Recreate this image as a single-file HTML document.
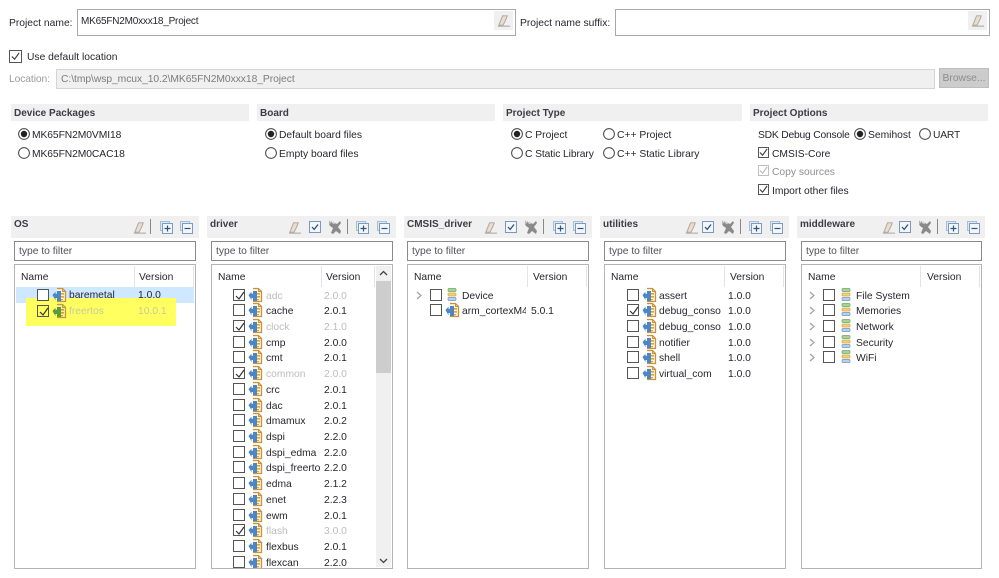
<!DOCTYPE html>
<html><head><meta charset="utf-8"><style>
html,body{margin:0;padding:0;background:#fff}
#a{position:relative;width:999px;height:578px;overflow:hidden;background:#fff;font:10.3px/16px "Liberation Sans",sans-serif;color:#26262e;filter:blur(.35px)}
#a div,#a span,#a svg{position:absolute;white-space:nowrap}
.b{border:1px solid #a8a8a8;background:#fff;box-sizing:border-box}
.h{background:#f0f0f0;height:17px;top:104px;width:238px}
.h b,.ph b{position:absolute;left:3px;top:2px;font-weight:bold;font-size:10px;color:#3c3c44}
.ph{background:#f0f0f0;height:22px;top:216px;left:0}
.ph b{top:1px}
.p{top:0;height:578px}
.f{top:241px;height:20px;border:1px solid #8a8a8a;background:#fff;box-sizing:border-box;color:#50505a;padding-left:4px;line-height:20px}
.tr{top:264px;height:305px;border:1px solid #b4b4b4;background:#fff;box-sizing:border-box}
.hd{top:270px}
.sep{top:266px;width:1px;height:21px;background:#e4e4e4}
.r{left:0;top:0;width:1px;height:16px}
.k{left:var(--c);top:2px;width:12px;height:12px;border:1px solid #555;background:#fff;box-sizing:border-box}
.kk{width:10px;height:10px;left:1px;top:1px}
.i{left:var(--i);top:0;width:15px;height:16px}
.t{left:var(--t);top:2px}
.v{left:var(--v);top:2px}
.g{color:#bdbdbd}
.ar{left:var(--a);top:4px;width:6px;height:9px}
.rb{width:12px;height:12px}
</style></head><body><div id="a">
<svg width="0" height="0" style="left:0;top:0"><defs>
<symbol id="p" viewBox="0 0 15 16"><path d="M5 1.5h5.5l3 3v10H5" fill="#fff4dc" stroke="#c8923e" stroke-width="1.3"/><path d="M10.5 1.5v3h3" fill="none" stroke="#c8923e"/><path d="M0.5 8l3-3.2v2h1.500V4h4v10H5v-3H3.500v2.200z" fill="#4c86c6"/><path d="M9 6h3v1.600H9zM9 9h3v1.600H9zM9 12h2v1.200H9z" fill="#e0a62e"/></symbol>
<symbol id="pg" viewBox="0 0 15 16"><path d="M5 1.5h5.500l3 3v10H5" fill="#f6f2a0" stroke="#c09c38" stroke-width="1.300"/><path d="M10.500 1.500v3h3" fill="none" stroke="#c09c38"/><path d="M0.500 8l3-3.200v2h1.500V4h4v10H5v-3H3.500v2.200z" fill="#5e9a3c"/><path d="M9 6h3v1.600H9zM9 9h3v1.600H9zM9 12h2v1.200H9z" fill="#d0a028"/></symbol>
<symbol id="st" viewBox="0 0 10 16"><rect x="1" y="1.500" width="8" height="3" rx="1" fill="#a8d0a0" stroke="#6aa860" stroke-width=".7"/><rect x="1" y="6" width="8" height="3" rx="1" fill="#f0d080" stroke="#d8a838" stroke-width=".7"/><rect x="1" y="10.500" width="8" height="3" rx="1" fill="#b8d0ec" stroke="#6c94c4" stroke-width=".7"/></symbol>
<symbol id="ck" viewBox="0 0 10 10"><path d="M1 5l3 3 5-7" fill="none" stroke="#333" stroke-width="1.200"/></symbol>
<symbol id="er" viewBox="0 0 16 16"><path d="M3 13L7 3h5l-1.500 4-3 6z" fill="#e8ddd0" stroke="#b0a494"/><path d="M2 14h13" stroke="#a0a0a0"/></symbol>
<symbol id="sa" viewBox="0 0 14 14"><rect x="1.500" y="1.500" width="11" height="11" fill="#f2f6fb" stroke="#7a98bc"/><path d="M4 7l2.200 2.400L10 4.500" fill="none" stroke="#2c4c74" stroke-width="1.200"/></symbol>
<symbol id="da" viewBox="0 0 16 16"><path d="M2 1l1 3 2-1 1 2 2-1 2 1 3-3 1 2-3 4 3 4-1 3-4-3-3 3-2-1 2-5-3-2-1-2z" fill="#8a8a8a"/><path d="M2 5l3-3M6 3l2 2" stroke="#c4c4c4"/></symbol>
<symbol id="ex" viewBox="0 0 13 13"><rect x=".5" y=".5" width="9" height="9" fill="#dfe9f4" stroke="#a8bed4"/><rect x="2.500" y="2.500" width="10" height="10" fill="#f2f6fb" stroke="#7c9cbe"/><path d="M7.500 4.500v6M4.500 7.500h6" stroke="#2c5680" stroke-width="1.200"/></symbol>
<symbol id="co" viewBox="0 0 13 13"><rect x=".5" y=".5" width="9" height="9" fill="#dfe9f4" stroke="#a8bed4"/><rect x="2.500" y="2.500" width="10" height="10" fill="#f2f6fb" stroke="#7c9cbe"/><path d="M4.500 7.500h6" stroke="#2c5680" stroke-width="1.200"/></symbol>
<symbol id="ro" viewBox="0 0 12 12"><circle cx="6" cy="6" r="5.400" fill="#fff" stroke="#444"/></symbol>
<symbol id="rs" viewBox="0 0 12 12"><circle cx="6" cy="6" r="5.400" fill="#fff" stroke="#444"/><circle cx="6" cy="6" r="3.200" fill="#222"/></symbol>
<symbol id="chev" viewBox="0 0 6 9"><path d="M1 1l4 3.500L1 8" fill="none" stroke="#a0a0a0" stroke-width="1.200"/></symbol>
</defs></svg>

<!-- top form -->
<div style="left:9px;top:16px">Project name:</div>
<div class="b" style="left:77px;top:9px;width:439px;height:27px"></div>
<div style="left:81px;top:14px;letter-spacing:-.2px;font-size:10px">MK65FN2M0xxx18_Project</div>
<div style="left:494px;top:11px;width:19px;height:19px;background:#f0f0f0"></div>
<svg style="left:496px;top:13px" width="15" height="15"><use href="#er"/></svg>
<div style="left:520px;top:16px">Project name suffix:</div>
<div class="b" style="left:615px;top:9px;width:375px;height:27px"></div>
<div style="left:968px;top:11px;width:19px;height:19px;background:#f0f0f0"></div>
<svg style="left:970px;top:13px" width="15" height="15"><use href="#er"/></svg>

<div style="left:9px;top:50px;width:11px;height:11px;border:1px solid #555;background:#fff"><svg style="left:1px;top:1px" width="9" height="9"><use href="#ck"/></svg></div>
<div style="left:27px;top:50px">Use default location</div>
<div style="left:9px;top:72px;color:#9a9a9a;letter-spacing:-.1px">Location:</div>
<div style="left:56px;top:69px;width:877px;height:18px;background:#f0f0f0;border:1px solid #d4d4d4"></div>
<div style="left:61px;top:72px;color:#7c7c7c;letter-spacing:-.05px">C:\tmp\wsp_mcux_10.2\MK65FN2M0xxx18_Project</div>
<div style="left:939px;top:68px;width:50px;height:20px;background:#cccccc;border:1px solid #bdbdbd;box-sizing:border-box;color:#8c8c8c;text-align:center;line-height:20px">Browse...</div>

<!-- section headers -->
<div class="h" style="left:11px"><b>Device Packages</b></div>
<div class="h" style="left:257px"><b>Board</b></div>
<div class="h" style="left:503px;width:239px"><b>Project Type</b></div>
<div class="h" style="left:750px"><b>Project Options</b></div>

<svg class="rb" style="left:18px;top:128px"><use href="#rs"/></svg><div style="left:32px;top:128px;letter-spacing:-.08px">MK65FN2M0VMI18</div>
<svg class="rb" style="left:18px;top:147px"><use href="#ro"/></svg><div style="left:32px;top:147px;letter-spacing:-.08px">MK65FN2M0CAC18</div>
<svg class="rb" style="left:265px;top:128px"><use href="#rs"/></svg><div style="left:279px;top:128px">Default board files</div>
<svg class="rb" style="left:265px;top:147px"><use href="#ro"/></svg><div style="left:279px;top:147px">Empty board files</div>
<svg class="rb" style="left:511px;top:128px"><use href="#rs"/></svg><div style="left:525px;top:128px">C Project</div>
<svg class="rb" style="left:511px;top:147px"><use href="#ro"/></svg><div style="left:525px;top:147px;letter-spacing:-.1px">C Static Library</div>
<svg class="rb" style="left:603px;top:128px"><use href="#ro"/></svg><div style="left:617px;top:128px">C++ Project</div>
<svg class="rb" style="left:603px;top:147px"><use href="#ro"/></svg><div style="left:617px;top:147px">C++ Static Library</div>
<div style="left:758px;top:128px;letter-spacing:-.2px">SDK Debug Console</div>
<svg class="rb" style="left:854px;top:128px"><use href="#rs"/></svg><div style="left:868px;top:128px">Semihost</div>
<svg class="rb" style="left:919px;top:128px"><use href="#ro"/></svg><div style="left:933px;top:128px;letter-spacing:-.2px">UART</div>
<div style="left:758px;top:147px;width:9px;height:9px;border:1px solid #555;padding:0"><svg style="left:0;top:0" width="9" height="9"><use href="#ck"/></svg></div><div style="left:772px;top:147px">CMSIS-Core</div>
<div style="left:758px;top:165px;width:9px;height:9px;border:1px solid #c0c0c0"><svg style="left:0;top:0;opacity:.35" width="9" height="9"><use href="#ck"/></svg></div><div style="left:772px;top:165px;color:#909090">Copy sources</div>
<div style="left:758px;top:184px;width:9px;height:9px;border:1px solid #555"><svg style="left:0;top:0" width="9" height="9"><use href="#ck"/></svg></div><div style="left:772px;top:184px">Import other files</div>

<!-- OS -->
<div class="p" style="left:14px;--c:23px;--i:38px;--t:55px;--v:124px;--a:0px">
<div class="ph" style="left:-3px;width:188px"><b>OS</b></div>
<svg style="left:118px;top:220px" width="15" height="15"><use href="#er"/></svg>
<div style="left:136px;top:219px;width:1px;height:15px;background:#888"></div>
<svg style="left:146px;top:221px" width="13" height="13"><use href="#ex"/></svg>
<svg style="left:166px;top:221px" width="13" height="13"><use href="#co"/></svg>
<div class="f" style="left:0;width:182px">type to filter</div>
<div class="tr" style="left:0;width:182px"></div>
<div class="hd" style="left:7px">Name</div><div class="hd" style="left:125px">Version</div>
<div class="sep" style="left:120px"></div><div class="sep" style="left:179px"></div>
<div style="left:2px;top:287px;width:178px;height:16px;background:#cde8ff"></div>
<div style="left:12px;top:298px;width:150px;height:28px;background:#ffff60"></div>
<div class="r" style="top:286px"><span class="k" style="top:3px"></span><svg class="i" style="top:1px"><use href="#p"/></svg><span class="t">baremetal</span><span class="v">1.0.0</span></div>
<div class="r" style="top:302px"><span class="k" style="background:none;top:3px"><svg class="kk"><use href="#ck"/></svg></span><svg class="i" style="top:1px"><use href="#pg"/></svg><span class="t" style="color:#c8c89a">freertos</span><span class="v" style="color:#c8c89a">10.0.1</span></div>
</div>

<!-- driver -->
<div class="p" style="left:211px;--c:22px;--i:37px;--t:55px;--v:113px">
<div class="ph" style="left:-4px;width:189px"><b>driver</b></div>
<svg style="left:76px;top:220px" width="15" height="15"><use href="#er"/></svg>
<svg style="left:97px;top:220px" width="14" height="14"><use href="#sa"/></svg>
<svg style="left:116px;top:219px" width="16" height="16"><use href="#da"/></svg>
<div style="left:136px;top:219px;width:1px;height:15px;background:#888"></div>
<svg style="left:145px;top:221px" width="13" height="13"><use href="#ex"/></svg>
<svg style="left:166px;top:221px" width="13" height="13"><use href="#co"/></svg>
<div class="f" style="left:0;width:182px">type to filter</div>
<div class="tr" style="left:0;width:182px"></div>
<div class="hd" style="left:7px">Name</div><div class="hd" style="left:115px">Version</div>
<div class="sep" style="left:110px"></div><div class="sep" style="left:163px"></div>
<div style="left:165px;top:266px;width:15px;height:301px;background:#f0f0f0"></div>
<div style="left:165px;top:281px;width:15px;height:92px;background:#cdcdcd"></div>
<svg style="left:168px;top:270px" width="9" height="7"><path d="M1 5l3.500-3.500L8 5" fill="none" stroke="#444" stroke-width="1.300"/></svg>
<svg style="left:168px;top:557px" width="9" height="7"><path d="M1 2l3.500 3.500L8 2" fill="none" stroke="#444" stroke-width="1.300"/></svg>
<div class="r" style="top:287px"><span class="k"><svg class="kk"><use href="#ck"/></svg></span><svg class="i"><use href="#p"/></svg><span class="t g">adc</span><span class="v g">2.0.0</span></div>
<div class="r" style="top:302px"><span class="k"></span><svg class="i"><use href="#p"/></svg><span class="t">cache</span><span class="v">2.0.1</span></div>
<div class="r" style="top:318px"><span class="k"><svg class="kk"><use href="#ck"/></svg></span><svg class="i"><use href="#p"/></svg><span class="t g">clock</span><span class="v g">2.1.0</span></div>
<div class="r" style="top:334px"><span class="k"></span><svg class="i"><use href="#p"/></svg><span class="t">cmp</span><span class="v">2.0.0</span></div>
<div class="r" style="top:349px"><span class="k"></span><svg class="i"><use href="#p"/></svg><span class="t">cmt</span><span class="v">2.0.1</span></div>
<div class="r" style="top:365px"><span class="k"><svg class="kk"><use href="#ck"/></svg></span><svg class="i"><use href="#p"/></svg><span class="t g">common</span><span class="v g">2.0.0</span></div>
<div class="r" style="top:381px"><span class="k"></span><svg class="i"><use href="#p"/></svg><span class="t">crc</span><span class="v">2.0.1</span></div>
<div class="r" style="top:397px"><span class="k"></span><svg class="i"><use href="#p"/></svg><span class="t">dac</span><span class="v">2.0.1</span></div>
<div class="r" style="top:412px"><span class="k"></span><svg class="i"><use href="#p"/></svg><span class="t">dmamux</span><span class="v">2.0.2</span></div>
<div class="r" style="top:428px"><span class="k"></span><svg class="i"><use href="#p"/></svg><span class="t">dspi</span><span class="v">2.2.0</span></div>
<div class="r" style="top:444px"><span class="k"></span><svg class="i"><use href="#p"/></svg><span class="t">dspi_edma</span><span class="v">2.2.0</span></div>
<div class="r" style="top:459px"><span class="k"></span><svg class="i"><use href="#p"/></svg><span class="t" style="width:54px;overflow:hidden">dspi_freertos</span><span class="v">2.2.0</span></div>
<div class="r" style="top:475px"><span class="k"></span><svg class="i"><use href="#p"/></svg><span class="t">edma</span><span class="v">2.1.2</span></div>
<div class="r" style="top:491px"><span class="k"></span><svg class="i"><use href="#p"/></svg><span class="t">enet</span><span class="v">2.2.3</span></div>
<div class="r" style="top:507px"><span class="k"></span><svg class="i"><use href="#p"/></svg><span class="t">ewm</span><span class="v">2.0.1</span></div>
<div class="r" style="top:522px"><span class="k"><svg class="kk"><use href="#ck"/></svg></span><svg class="i"><use href="#p"/></svg><span class="t g">flash</span><span class="v g">3.0.0</span></div>
<div class="r" style="top:538px"><span class="k"></span><svg class="i"><use href="#p"/></svg><span class="t">flexbus</span><span class="v">2.0.1</span></div>
<div style="left:0;top:552px;width:165px;height:16px;overflow:hidden"><div class="r" style="top:2px"><span class="k"></span><svg class="i"><use href="#p"/></svg><span class="t">flexcan</span><span class="v">2.2.0</span></div></div>
</div>

<!-- CMSIS -->
<div class="p" style="left:407px;--c:23px;--i:38px;--t:55px;--v:124px;--a:9px">
<div class="ph" style="left:-3px;width:188px"><b>CMSIS_driver</b></div>
<svg style="left:76px;top:220px" width="15" height="15"><use href="#er"/></svg>
<svg style="left:97px;top:220px" width="14" height="14"><use href="#sa"/></svg>
<svg style="left:116px;top:219px" width="16" height="16"><use href="#da"/></svg>
<div style="left:136px;top:219px;width:1px;height:15px;background:#888"></div>
<svg style="left:146px;top:221px" width="13" height="13"><use href="#ex"/></svg>
<svg style="left:166px;top:221px" width="13" height="13"><use href="#co"/></svg>
<div class="f" style="left:0;width:182px">type to filter</div>
<div class="tr" style="left:0;width:182px"></div>
<div class="hd" style="left:7px">Name</div><div class="hd" style="left:126px">Version</div>
<div class="sep" style="left:120px"></div><div class="sep" style="left:179px"></div>
<div class="r" style="top:287px"><svg class="ar"><use href="#chev"/></svg><span class="k"></span><svg style="left:40px;top:0" width="10" height="16"><use href="#st"/></svg><span class="t">Device</span></div>
<div class="r" style="top:302px"><span class="k"></span><svg class="i"><use href="#p"/></svg><span class="t" style="width:64px;overflow:hidden">arm_cortexM4</span><span class="v">5.0.1</span></div>
</div>

<!-- utilities -->
<div class="p" style="left:604px;--c:23px;--i:38px;--t:55px;--v:124px">
<div class="ph" style="left:-4px;width:189px"><b>utilities</b></div>
<svg style="left:80px;top:220px" width="15" height="15"><use href="#er"/></svg>
<svg style="left:97px;top:220px" width="14" height="14"><use href="#sa"/></svg>
<svg style="left:116px;top:219px" width="16" height="16"><use href="#da"/></svg>
<div style="left:136px;top:219px;width:1px;height:15px;background:#888"></div>
<svg style="left:145px;top:221px" width="13" height="13"><use href="#ex"/></svg>
<svg style="left:166px;top:221px" width="13" height="13"><use href="#co"/></svg>
<div class="f" style="left:0;width:182px">type to filter</div>
<div class="tr" style="left:0;width:182px"></div>
<div class="hd" style="left:7px">Name</div><div class="hd" style="left:126px">Version</div>
<div class="sep" style="left:120px"></div><div class="sep" style="left:179px"></div>
<div class="r" style="top:287px"><span class="k"></span><svg class="i"><use href="#p"/></svg><span class="t">assert</span><span class="v">1.0.0</span></div>
<div class="r" style="top:302px"><span class="k"><svg class="kk"><use href="#ck"/></svg></span><svg class="i"><use href="#p"/></svg><span class="t" style="width:62px;overflow:hidden">debug_console</span><span class="v">1.0.0</span></div>
<div class="r" style="top:318px"><span class="k"></span><svg class="i"><use href="#p"/></svg><span class="t" style="width:62px;overflow:hidden">debug_console</span><span class="v">1.0.0</span></div>
<div class="r" style="top:334px"><span class="k"></span><svg class="i"><use href="#p"/></svg><span class="t">notifier</span><span class="v">1.0.0</span></div>
<div class="r" style="top:349px"><span class="k"></span><svg class="i"><use href="#p"/></svg><span class="t">shell</span><span class="v">1.0.0</span></div>
<div class="r" style="top:365px"><span class="k"></span><svg class="i"><use href="#p"/></svg><span class="t">virtual_com</span><span class="v">1.0.0</span></div>
</div>

<!-- middleware -->
<div class="p" style="left:801px;--c:22px;--i:40px;--t:55px;--v:124px;--a:8px">
<div class="ph" style="left:-4px;width:188px"><b>middleware</b></div>
<svg style="left:80px;top:220px" width="15" height="15"><use href="#er"/></svg>
<svg style="left:97px;top:220px" width="14" height="14"><use href="#sa"/></svg>
<svg style="left:116px;top:219px" width="16" height="16"><use href="#da"/></svg>
<div style="left:136px;top:219px;width:1px;height:15px;background:#888"></div>
<svg style="left:145px;top:221px" width="13" height="13"><use href="#ex"/></svg>
<svg style="left:166px;top:221px" width="13" height="13"><use href="#co"/></svg>
<div class="f" style="left:0;width:181px">type to filter</div>
<div class="tr" style="left:0;width:181px"></div>
<div class="hd" style="left:7px">Name</div><div class="hd" style="left:126px">Version</div>
<div class="sep" style="left:119px"></div><div class="sep" style="left:178px"></div>
<div class="r" style="top:287px"><svg class="ar"><use href="#chev"/></svg><span class="k"></span><svg style="left:40px;top:0" width="10" height="16"><use href="#st"/></svg><span class="t">File System</span></div>
<div class="r" style="top:302px"><svg class="ar"><use href="#chev"/></svg><span class="k"></span><svg style="left:40px;top:0" width="10" height="16"><use href="#st"/></svg><span class="t">Memories</span></div>
<div class="r" style="top:318px"><svg class="ar"><use href="#chev"/></svg><span class="k"></span><svg style="left:40px;top:0" width="10" height="16"><use href="#st"/></svg><span class="t">Network</span></div>
<div class="r" style="top:334px"><svg class="ar"><use href="#chev"/></svg><span class="k"></span><svg style="left:40px;top:0" width="10" height="16"><use href="#st"/></svg><span class="t">Security</span></div>
<div class="r" style="top:349px"><svg class="ar"><use href="#chev"/></svg><span class="k"></span><svg style="left:40px;top:0" width="10" height="16"><use href="#st"/></svg><span class="t">WiFi</span></div>
</div>
</div></body></html>
